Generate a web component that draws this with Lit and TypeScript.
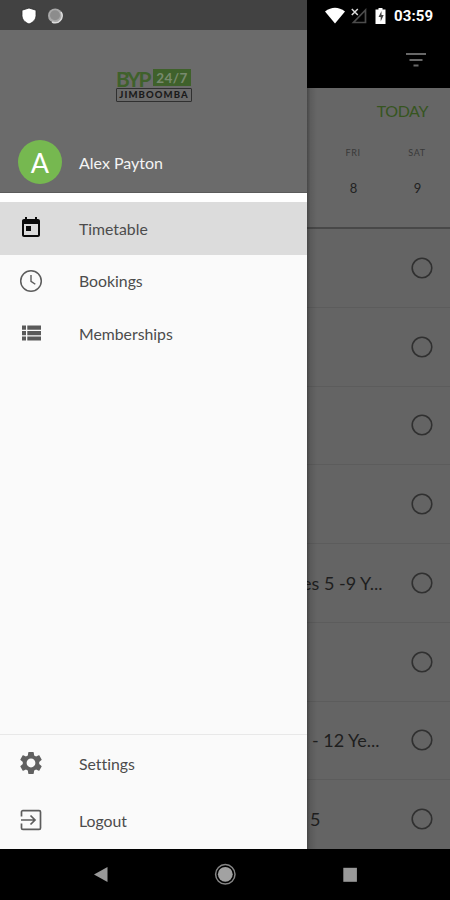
import { LitElement, html, css, svg } from "lit";
import { customElement } from "lit/decorators.js";
import { classMap } from "lit/directives/class-map.js";

interface MenuEntry {
  key: string;
  label: string;
  active?: boolean;
}

const MENU: MenuEntry[] = [
  { key: "calendar", label: "Timetable", active: true },
  { key: "clock", label: "Bookings" },
  { key: "list", label: "Memberships" },
];

const FOOTER: MenuEntry[] = [
  { key: "gear", label: "Settings" },
  { key: "exit", label: "Logout" },
];

const CLASSES = ["", "", "", "", "es 5 -9 Y...", "", "- 12 Ye...", "5"];

const ICONS: Record<string, unknown> = {
  calendar: svg`<path fill="#0b0b0b" d="M19 3h-1V1h-2v2H8V1H6v2H5c-1.110 0-2 .9-2 2v14c0 1.100.89 2 2 2h14c1.100 0 2-.9 2-2V5c0-1.100-.9-2-2-2zm0 16H5V8h14v11zM7 10h5v5H7z"/>`,
  clock: svg`<g fill="none" stroke="#5c5c5c"><circle cx="12" cy="12" r="10.300" stroke-width="1.500"/><path stroke-width="1.400" d="M12 6v6.300l4.300 3"/></g>`,
  list: svg`<path fill="#5a5a5a" d="M3 4.600h4v4.200H3zM3 10h4v4.200H3zM3 15.400h4v4.200H3zM8.300 4.600H22v4.200H8.300zM8.300 10H22v4.200H8.300zM8.300 15.400H22v4.200H8.300z"/>`,
  gear: svg`<path fill="#606060" transform="translate(-1.200 -1.200) scale(1.100)" d="M19.430 12.980c.04-.32.07-.64.07-.98s-.03-.66-.07-.98l2.110-1.650c.19-.15.24-.42.12-.64l-2-3.460c-.12-.22-.39-.3-.61-.22l-2.490 1c-.52-.4-1.080-.73-1.690-.98l-.38-2.650C14.460 2.180 14.250 2 14 2h-4c-.25 0-.46.18-.49.42l-.38 2.650c-.61.25-1.170.59-1.690.98l-2.490-1c-.23-.09-.49 0-.61.22l-2 3.460c-.13.22-.07.49.12.64l2.110 1.650c-.04.32-.07.65-.07.98s.03.66.07.98l-2.110 1.650c-.19.15-.24.42-.12.64l2 3.460c.12.22.39.3.61.22l2.490-1c.52.4 1.080.73 1.690.98l.38 2.650c.03.24.24.42.49.42h4c.25 0 .46-.18.49-.42l.38-2.650c.61-.25 1.170-.59 1.690-.98l2.490 1c.23.09.49 0 .61-.22l2-3.460c.12-.22.07-.49-.12-.64l-2.110-1.650zM12 16c-2.210 0-4-1.790-4-4s1.790-4 4-4 4 1.790 4 4-1.790 4-4 4z"/>`,
  exit: svg`<g fill="none" stroke="#5c5c5c" stroke-width="1.700"><path d="M2.500 8.500V4c0-.8.600-1.400 1.400-1.400h16.200c.8 0 1.400.6 1.400 1.400v16c0 .8-.6 1.400-1.400 1.400H3.900c-.8 0-1.400-.6-1.400-1.400v-4.500"/><path d="M2 12h13M11.500 7.500l4.500 4.500l-4.500 4.500"/></g>`,
};

@customElement("app-root")
export class AppRoot extends LitElement {
  static styles = css`
    :host {
      display: flex;
      flex-direction: column;
      width: 450px;
      height: 900px;
      overflow: hidden;
      background: #000;
      font-family: Lato, "Open Sans", sans-serif;
      font-variant-ligatures: none;
    }
    svg { display: block; flex: none; }
    .content { display: flex; flex: none; height: 848.500px; }

    .drawer {
      width: 307px;
      display: flex;
      flex-direction: column;
      background: #fafafa;
    }
    .drawer-status {
      height: 30px;
      background: #424242;
      display: flex;
      align-items: center;
    }
    .account {
      height: 163px;
      box-sizing: border-box;
      background: #6b6b6b;
      border-bottom: 1px solid #5b5b5b;
      display: flex;
      flex-direction: column;
    }
    .logo {
      width: 76px;
      height: 35px;
      margin: 39px 0 0 116px;
      display: flex;
      flex-direction: column;
    }
    .logo-top { display: flex; height: 18px; gap: 2px; }
    .byp {
      width: 35px;
      font: 700 21px/19px Lato, sans-serif;
      letter-spacing: -2.200px;
      color: #3f612b;
    }
    .hours {
      width: 38px;
      height: 17px;
      background: #3f612b;
      color: #788a6e;
      font: 700 13.500px/18px Lato, sans-serif;
      letter-spacing: .4px;
      text-align: center;
    }
    .place {
      box-sizing: border-box;
      width: 76px;
      height: 14px;
      margin-top: 1px;
      border: 1px solid #303030;
      border-radius: 1px;
      color: #1a1a1a;
      font: 900 9.500px/12px Lato, sans-serif;
      letter-spacing: 1.100px;
      text-align: center;
      white-space: nowrap;
    }
    .user {
      display: flex;
      align-items: center;
      height: 44px;
      margin: 36px 0 0 18px;
      gap: 17px;
      color: #f4f4f4;
      font-size: 16px;
    }
    .avatar {
      width: 44px;
      height: 44px;
      border-radius: 50%;
      background: #76b850;
      font-size: 27px;
      line-height: 46px;
      text-align: center;
      color: #fff;
    }
    .menu { flex: 1; padding-top: 9px; background: linear-gradient(#fff 9px, #fafafa 9px); }
    .item {
      height: 52.500px;
      display: flex;
      align-items: center;
      padding-left: 19px;
      gap: 36px;
      color: #4c4c4c;
      font-size: 15.800px;
    }
    .active { background: #dcdcdc; }
    .footer { height: 115px; box-sizing: border-box; border-top: 1px solid #e8e8e8; }
    .footer .item { height: 57px; }

    .page {
      flex: 1;
      overflow: hidden;
      display: flex;
      flex-direction: column;
      background: #646464;
      color: #222;
      position: relative;
    }
    .shade {
      position: absolute;
      top: 88px;
      bottom: 0;
      left: 0;
      width: 10px;
      background: linear-gradient(90deg, rgba(0, 0, 0, .3), rgba(0, 0, 0, .1) 35%, transparent);
    }
    .bar { flex: none; height: 88px; background: #000; }
    .status { display: flex; align-items: center; height: 32px; }
    .time {
      font: 700 15px/32px Roboto, sans-serif;
      color: #fff;
      margin-left: 8px;
      letter-spacing: .1px;
    }
    .filter { margin: 21px 0 0 98px; }
    .week {
      flex: none;
      height: 141px;
      box-sizing: border-box;
      border-bottom: 2px solid #484848;
      background: #666;
    }
    .today {
      padding: 12px 22px 0 0;
      text-align: right;
      font-size: 16px;
      line-height: 22px;
      letter-spacing: -.4px;
      color: #36551f;
    }
    .days {
      display: grid;
      grid-template-columns: 64px 64px;
      margin: 24px 0 0 14px;
      text-align: center;
    }
    .name { font-size: 9px; line-height: 14px; letter-spacing: .6px; color: #393939; }
    .num { font-size: 13px; line-height: 18px; margin-top: 19px; color: #222; padding-left: 1px; }
    .row {
      height: 78.750px;
      flex: none;
      box-sizing: border-box;
      border-bottom: 1px solid #5c5c5c;
      display: flex;
      align-items: center;
      justify-content: space-between;
      padding-right: 17px;
    }
    .title { font-size: 18px; white-space: nowrap; color: #1e1e1e; }
    .wide { margin-left: -5px; }
    .mid { margin-left: 5px; }
    .short { margin-left: 3px; }

    .nav { flex: 1; background: #000; }
  `;

  private item(e: MenuEntry) {
    return html`<div class=${classMap({ item: true, active: !!e.active })}>
      <svg width="24" height="24" viewBox="0 0 24 24">${ICONS[e.key]}</svg>
      <span class="label">${e.label}</span>
    </div>`;
  }

  private row(text: string) {
    const size = classMap({
      title: true,
      wide: text.length > 10,
      mid: text.length === 10,
      short: text.length === 1,
    });
    return html`<div class="row">
      <span class=${size}>${text}</span>
      <svg width="22" height="22" viewBox="0 0 22 22">
        <circle cx="11" cy="11" r="9.800" fill="none" stroke="#303030" stroke-width="1.600" />
      </svg>
    </div>`;
  }

  render() {
    return html`
      <div class="content">
        <div class="drawer">
          <div class="drawer-status">
            <svg width="80" height="30" viewBox="0 0 80 30">
              <path d="M29 8l7 2.200v5.300c0 4-3 7-7 8.500c-4-1.500-7-4.500-7-8.500v-5.300z" fill="#fff" stroke="#2c2c2c" stroke-width=".8" />
              <circle cx="55.200" cy="15.700" r="7.200" fill="#a9a9a9" />
              <path d="M61 12a7 7 0 0 1-9 10" fill="none" stroke="#ddd" stroke-width="1.500" />
              <circle cx="55" cy="15.300" r="5" fill="#8c8c8c" />
            </svg>
          </div>
          <div class="account">
            <div class="logo">
              <div class="logo-top"><span class="byp">BYP</span><span class="hours">24/7</span></div>
              <div class="place">JIMBOOMBA</div>
            </div>
            <div class="user"><div class="avatar">A</div><span>Alex Payton</span></div>
          </div>
          <div class="menu">${MENU.map((e) => this.item(e))}</div>
          <div class="footer">${FOOTER.map((e) => this.item(e))}</div>
        </div>
        <div class="page">
          <div class="bar">
            <div class="status">
              <svg width="79" height="32" viewBox="0 0 79 32">
                <path d="M18 11.500Q28 4 38 11.500L28 23.500z" fill="#fff" />
                <path d="M58.500 10v12.500H46.500z" fill="none" stroke="#4c4c4c" stroke-width="1.700" />
                <path d="M44.800 9l6 6M50.800 9l-6 6" stroke="#ddd" stroke-width="1.500" />
                <path d="M71.500 8h4v1.500h3V24h-10V9.500h3z" fill="#fff" />
                <path d="M74.500 11l-3 6h2.200v4.500l3-6.500h-2.200z" fill="#444" />
              </svg>
              <span class="time">03:59</span>
            </div>
            <svg class="filter" width="22" height="16" viewBox="0 0 22 16">
              <path d="M1 1h20M4.500 7h13M8.500 12.500h5" fill="none" stroke="#686868" stroke-width="2" />
            </svg>
          </div>
          <div class="week">
            <div class="today">TODAY</div>
            <div class="days">
              <span class="name">FRI</span><span class="name">SAT</span>
              <span class="num">8</span><span class="num">9</span>
            </div>
          </div>
          ${CLASSES.map((c) => this.row(c))}
          <div class="shade"></div>
        </div>
      </div>
      <div class="nav">
        <svg width="450" height="51" viewBox="0 0 450 51">
          <path d="M107.500 18v15L94 25.500z" fill="#999" />
          <circle cx="225.300" cy="25.300" r="9.700" fill="none" stroke="#858585" stroke-width="1.500" />
          <circle cx="225.300" cy="25.300" r="7.400" fill="#a2a2a2" />
          <rect x="343.300" y="18.800" width="13.600" height="14" fill="#999" />
        </svg>
      </div>
    `;
  }
}
